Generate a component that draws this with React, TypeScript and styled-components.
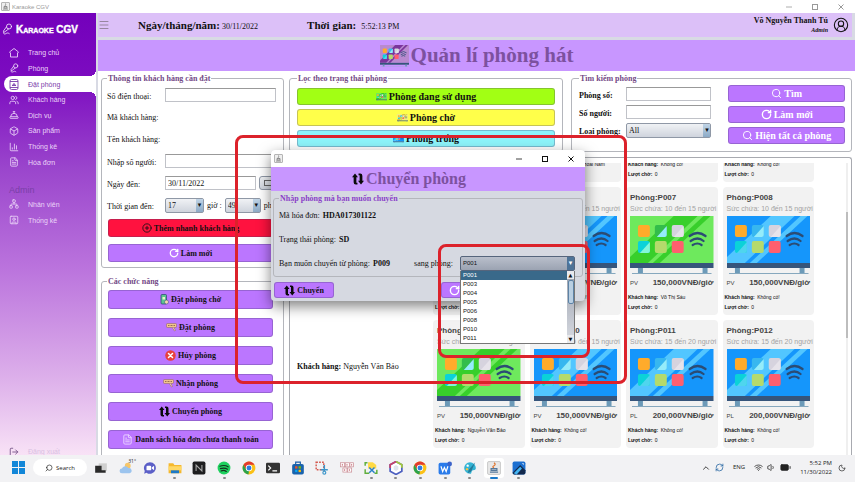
import React from 'react';
import styled, { createGlobalStyle, css } from 'styled-components';
import {
  BatteryMedium, Box, ChevronUp, CircleUserRound, CirclePlus, ConciergeBell, FileText, LogOut, Menu,
  MicVocal, Moon, RefreshCw, RotateCw, Search, ChartColumn, SquareUser, Users, Volume1, Wifi, Network,
} from 'lucide-react';

const serif = '"Liberation Serif", "Times New Roman", serif';
const sans = '"Liberation Sans", Arial, sans-serif';
const ui = '"Open Sans", "Noto Sans", sans-serif';

const GlobalStyle = createGlobalStyle`
  *, *::before, *::after { box-sizing: border-box; }
  body { margin: 0; font-family: ${sans}; color: #111; background: #fff; }
  button, input, select { font-family: inherit; margin: 0; }
  svg { display: block; flex: none; }
`;

/* ---------- shell ---------- */
const Desktop = styled.div`
  position: relative;
  height: 100vh;
  display: flex;
  flex-direction: column;
  overflow: hidden;
`;
const WindowBar = styled.header`
  display: flex;
  align-items: center;
  gap: 2px;
  height: 13px;
  padding: 0 10px 0 1px;
  font: 6px ${sans};
  color: #999;
  flex: none;
`;
const WindowControls = styled.div`
  display: flex;
  gap: 18px;
  margin-left: auto;
`;
const PlainButton = styled.button`
  padding: 0;
  border: 0;
  background: none;
  color: inherit;
  cursor: pointer;
`;
const Body = styled.div`
  flex: 1;
  min-height: 0;
  display: flex;
`;

/* ---------- sidebar ---------- */
const Sidebar = styled.nav`
  width: 96px;
  flex: none;
  display: flex;
  flex-direction: column;
  overflow: hidden;
  background: linear-gradient(#7300bb 0%, #7c0cc0 15%, #9a45cc 35%, #bb74dd 58%, #dcaeea 82%, #f8e2f6 100%);
`;
const Brand = styled.div`
  display: flex;
  align-items: center;
  gap: 3px;
  height: 32px;
  padding-left: 1px;
  color: #fff;
  font: bold 10px ${sans};
  font-variant: small-caps;
  -webkit-text-stroke: 0.4px #fff;
  white-space: nowrap;
`;
const NavGroup = styled.div<{ $rows: number }>`
  display: grid;
  grid-auto-rows: 1fr;
  height: ${p => p.$rows * 16 - (p.$rows > 4 ? 3 : 0)}px;
`;
const NavLink = styled.a<{ $active?: boolean }>`
  position: relative;
  display: flex;
  align-items: center;
  gap: 9px;
  padding-left: 9px;
  color: #ead4f8;
  font-size: 7px;
  text-decoration: none;
  white-space: nowrap;
  ${p => p.$active && css`
    margin-left: 4px;
    padding-left: 5px;
    color: #7b3cab;
    background: #fff;
    border-radius: 8px 0 0 8px;
    &::before, &::after {
      content: '';
      position: absolute;
      right: 0;
      width: 6px;
      height: 6px;
    }
    &::before { bottom: 100%; background: radial-gradient(circle at 0 0, transparent 6px, #fff 6px); }
    &::after { top: 100%; background: radial-gradient(circle at 0 100%, transparent 6px, #fff 6px); }
  `}
`;
const NavHeading = styled.h2`
  margin: 15px 0 0;
  padding-left: 9px;
  color: #7a3fa8;
  font: 9px/11px ${sans};
`;
const LogoutLink = styled(NavLink)`
  margin-top: auto;
  height: 7px;
  color: #d9c0e2;
  svg { color: #6c4a80; }
`;

/* ---------- main ---------- */
const Main = styled.main`
  flex: 1;
  min-width: 0;
  display: flex;
  flex-direction: column;
  padding-left: 2px;
  background: #d8dae4;
`;
const TopBar = styled.div`
  display: flex;
  align-items: center;
  height: 24px;
  flex: none;
  margin-right: 3px;
  padding: 0 3px 0 0;
  background: #dcc0f8;
  font-family: ${serif};
`;
const Stat = styled.div<{ $gap: number; $left: number }>`
  display: flex;
  align-items: baseline;
  gap: ${p => p.$gap}px;
  margin-left: ${p => p.$left}px;
  font-size: 8px;
  white-space: nowrap;
  strong { font-size: 11px; }
`;
const UserBox = styled.div`
  display: flex;
  align-items: center;
  gap: 5px;
  margin-left: auto;
  text-align: right;
  font: bold 8px/10px ${serif};
  em { display: block; font-size: 6px; line-height: 8px; }
`;
const PageTitle = styled.h1`
  display: flex;
  align-items: center;
  justify-content: center;
  gap: 2px;
  flex: none;
  height: 31px;
  margin: 3px 0 0;
  background: #c896ff;
  color: #7d519f;
  font: bold 21px ${serif};
`;
const Content = styled.div`
  flex: 1;
  min-height: 0;
  display: grid;
  grid-template-columns: 183px minmax(0, 1fr);
  gap: 5px;
  padding: 3px 3px 0;
  background: #fff;
  overflow: hidden;
`;
const Column = styled.div`
  display: flex;
  flex-direction: column;
  min-width: 0;
  min-height: 0;
`;
const FilterRow = styled.div`
  display: grid;
  grid-template-columns: minmax(0, 274fr) minmax(0, 281fr);
  gap: 8px;
  flex: none;
`;
const Panel = styled.fieldset<{ $pad: string; $legend?: string }>`
  min-width: 0;
  margin: 0;
  padding: ${p => p.$pad};
  border: 1px solid #b4b6bc;
  border-radius: 3px;
  font-family: ${serif};
  font-size: 8px;
  > legend {
    padding: 0 1px;
    color: ${p => p.$legend || '#744a86'};
    font-weight: bold;
    line-height: 9px;
    white-space: nowrap;
  }
`;
const Field = styled.div<{ $label: number; $height: number; $bold?: boolean }>`
  display: grid;
  grid-template-columns: ${p => p.$label}px minmax(0, 1fr);
  align-items: center;
  height: ${p => p.$height}px;
  label, > span { font-weight: ${p => (p.$bold ? 'bold' : 'normal')}; white-space: nowrap; }
  label { padding-top: 3px; }
`;
const TextInput = styled.input`
  width: 100%;
  min-width: 0;
  height: 14px;
  padding: 0 2px;
  border: 1px solid #c0c2c8;
  border-top-color: #999;
  background: #fff;
  color: #111;
  font: 8px ${serif};
`;
const Inline = styled.div`
  display: flex;
  align-items: center;
  gap: 3px;
  white-space: nowrap;
`;
const SelectWrap = styled.div<{ $width?: number; $dark?: boolean }>`
  position: relative;
  flex: none;
  width: ${p => (p.$width ? `${p.$width}px` : '100%')};
  select {
    display: block;
    appearance: none;
    width: 100%;
    height: 15px;
    padding: 0 10px 0 2px;
    border: 1px solid ${p => (p.$dark ? '#56657c' : '#8f98a6')};
    border-radius: 2px;
    background: ${p => (p.$dark ? 'linear-gradient(#b9bfcb, #9ba3b2)' : 'linear-gradient(#f0f2f5, #cfd4dd)')};
    color: #111;
    font: ${p => (p.$dark ? `6px ${sans}` : `8px ${serif}`)};
  }
  &::after {
    content: '▾';
    position: absolute;
    inset: 1px 1px 1px auto;
    width: 7px;
    background: ${p => (p.$dark ? '#4e7397' : 'linear-gradient(#c0d4e6, #8caac6)')};
    color: ${p => (p.$dark ? '#fff' : '#111')};
    font: 7px/13px "DejaVu Sans", sans-serif;
    text-align: center;
    pointer-events: none;
  }
`;
const ActionButton = styled.button<{ $bg?: string; $fg?: string; $size?: number; $height?: number }>`
  display: flex;
  align-items: center;
  justify-content: center;
  gap: 2px;
  width: 100%;
  height: ${p => p.$height || 19}px;
  padding: 0;
  border: 1px solid rgba(70, 60, 110, 0.3);
  border-radius: 3px;
  background: ${p => p.$bg || '#bb76ff'};
  color: ${p => p.$fg || '#111'};
  font: bold ${p => p.$size || 8}px ${serif};
  white-space: nowrap;
  cursor: pointer;
`;
const Stack = styled.div<{ $gap: number; $top?: number }>`
  display: flex;
  flex-direction: column;
  gap: ${p => p.$gap}px;
  margin-top: ${p => p.$top || 0}px;
`;
const ButtonArea = styled.div`
  padding: 0 3px 0 1px;
`;
const Functions = styled.div`
  margin-top: 9px;
`;
const CalendarButton = styled.button`
  display: grid;
  place-items: center;
  flex: none;
  width: 17px;
  height: 14px;
  padding: 0;
  border: 1px solid #8f98a6;
  border-radius: 3px;
  background: linear-gradient(#f0f2f5, #cfd4dd);
`;
const SearchGrid = styled.div`
  display: grid;
  grid-template-columns: minmax(0, 133fr) minmax(0, 117fr);
  gap: 17px;
`;

/* ---------- rooms ---------- */
const RoomsPanel = styled.section`
  flex: 1;
  min-height: 0;
  display: flex;
  margin-top: 5px;
  padding: 5px 3px 0 0;
  border: 1px solid #a8aab0;
  border-bottom: 0;
  border-radius: 3px 3px 0 0;
`;
const RoomInfo = styled.div`
  width: 143px;
  flex: none;
  display: flex;
  flex-direction: column;
  justify-content: flex-end;
  padding: 0 0 83px 7px;
  font: 8px/10px ${serif};
  white-space: nowrap;
`;
const RoomsViewport = styled.div`
  flex: 1;
  min-width: 0;
  display: flex;
  flex-direction: column;
  justify-content: flex-end;
  overflow: hidden;
  padding-bottom: 7px;
`;
const RoomsGrid = styled.div`
  display: grid;
  grid-template-columns: repeat(4, minmax(0, 1fr));
  gap: 5px;
`;
const ScrollTrack = styled.div`
  width: 2px;
  margin-left: 32px;
  padding-top: 49px;
  background: #efefef;
  &::before { content: ''; display: block; height: 126px; background: #bdbdbd; }
`;
const Card = styled.article`
  padding: 5px 4px 3px;
  border-radius: 4px;
  background: #f2f2f2;
  white-space: nowrap;
  h3 { margin: 0; color: #444; font: bold 8px/11px ${sans}; }
  svg { width: 100%; height: 58px; margin-top: 1px; }
`;
const Capacity = styled.div`
  color: #a2a2a2;
  font: 7px/12px ${sans};
`;
const Price = styled.div`
  display: flex;
  justify-content: space-between;
  color: #444;
  font: 6px/18px ${sans};
  strong { font-size: 8px; }
`;
const CardLine = styled.div`
  margin-left: -2px;
  font: 5px/10px ${sans};
  b { margin-right: 1px; }
`;

/* ---------- dialog ---------- */
const Dialog = styled.div`
  position: absolute;
  left: 271px;
  top: 150px;
  width: 314px;
  border-radius: 4px;
  background: #d6d9e1;
  box-shadow: 0 5px 14px rgba(0, 0, 0, 0.5);
`;
const DialogBar = styled.div`
  display: flex;
  align-items: center;
  height: 17px;
  padding: 0 10px 0 3px;
  background: #fff;
  border-radius: 4px 4px 0 0;
`;
const DialogTitle = styled.h2`
  display: flex;
  align-items: center;
  justify-content: center;
  gap: 2px;
  height: 24px;
  margin: 0;
  padding-right: 38px;
  background: #c896ff;
  color: #7d519f;
  font: bold 16px ${serif};
`;
const DialogBody = styled.div`
  padding: 3px 2px;
`;
const DialogLine = styled.div`
  display: flex;
  align-items: center;
  gap: 3px;
  height: 24px;
  white-space: nowrap;
`;
const TargetLabel = styled.label`
  margin-left: auto;
`;
const Picker = styled.div`
  position: relative;
  width: 115px;
  margin-left: 4px;
`;
const OptionList = styled.ul`
  position: absolute;
  z-index: 2;
  top: 100%;
  left: 0;
  right: 0;
  margin: 0;
  padding: 0 7px 0 0;
  border: 1px solid #777;
  border-top: 0;
  background: linear-gradient(#9aa0ac, #d8dbe2) right / 7px 100% no-repeat #fff;
  list-style: none;
  font: 6px/9px ${sans};
  &::before {
    content: '';
    position: absolute;
    right: 0;
    top: 9px;
    width: 6px;
    height: 24px;
    border: 1px solid #5d83a6;
    border-radius: 2px;
    background: #b9cfe2;
  }
`;
const Option = styled.li<{ $selected: boolean }>`
  padding-left: 2px;
  background: ${p => (p.$selected ? '#39698a' : '#fff')};
  color: ${p => (p.$selected ? '#fff' : '#111')};
`;
const ScrollArrow = styled.span<{ $end: 'top' | 'bottom' }>`
  position: absolute;
  right: 0;
  ${p => p.$end}: 0;
  width: 7px;
  height: 8px;
  background: #e8eaee;
  color: #111;
  font: 5px/8px "DejaVu Sans", sans-serif;
  text-align: center;
`;
const DialogActions = styled.div`
  display: grid;
  grid-template-columns: 60px 60px;
  gap: 107px;
  margin: 5px 0 0 1px;
`;
const Marker = styled.div<{ $x: number; $y: number; $w: number; $h: number }>`
  position: absolute;
  left: ${p => p.$x}px;
  top: ${p => p.$y}px;
  width: ${p => p.$w}px;
  height: ${p => p.$h}px;
  border: 3px solid #dc222b;
  border-radius: 8px;
  pointer-events: none;
`;

/* ---------- taskbar ---------- */
const Taskbar = styled.footer`
  display: flex;
  align-items: center;
  height: 27px;
  flex: none;
  padding: 0 9px 2px 12px;
  background: #f2f2f4;
  color: #222;
  font: 6px/9px ${ui};
`;
const SearchBox = styled.button`
  display: flex;
  align-items: center;
  justify-content: center;
  gap: 3px;
  width: 54px;
  height: 17px;
  margin: 0 2px 0 8px;
  padding: 0;
  border: 0;
  border-radius: 9px;
  background: #fff;
  color: #222;
  font: 6px ${ui};
  svg { transform: scaleX(-1); }
`;
const Apps = styled.div`
  display: grid;
  grid-template-columns: repeat(18, 1fr);
  width: 442px;
`;
const AppButton = styled(PlainButton)<{ $running?: boolean; $focused?: boolean }>`
  position: relative;
  display: grid;
  place-items: center;
  height: 20px;
  margin: 0 2px;
  border-radius: 3px;
  background: ${p => (p.$focused ? '#fff' : 'none')};
  &::after {
    content: '';
    position: absolute;
    bottom: -1px;
    width: ${p => (p.$focused ? 8 : 3)}px;
    height: 2px;
    border-radius: 1px;
    background: ${p => (p.$focused ? '#1a78c8' : p.$running ? '#888' : 'transparent')};
  }
`;
const Tray = styled.div`
  display: flex;
  align-items: center;
  gap: 4px;
  margin-left: auto;
`;
const Clock = styled.time`
  margin: 0 2px 0 5px;
  text-align: right;
`;
const Lang = styled.span`margin: 0 5px;`;

/* ---------- drawings ---------- */
const JavaIcon = ({ size = 9 }: { size?: number }) => (
  <svg width={size} height={size} viewBox="0 0 18 18">
    <rect x="1" y="1" width="16" height="16" rx="1" fill="#eee" stroke="#999" strokeWidth="1.4" />
    <path d="M9 3c2 2-2 3 0 5M6 9h6v3H6zM4 14h10" stroke="#777" strokeWidth="1.6" fill="none" />
  </svg>
);
const SwapIcon = ({ size = 11 }: { size?: number }) => (
  <svg width={size} height={size} viewBox="0 0 22 22" fill="#0a0a0a">
    <path d="M0 8 5.5 1 11 8H8v10h2v3H7q-4 0-4-4V8zM22 14l-5.500 7-5.500-7h3V4h-2V1h3q4 0 4 4v9z" />
  </svg>
);
const HomeIcon = () => (
  <svg width="10" height="10" viewBox="0 0 20 20" fill="none" stroke="currentColor" strokeWidth="1.8">
    <path d="M10 1 19 8l-2 2v8H3v-8L1 8z" />
  </svg>
);
const BookIcon = () => (
  <svg width="10" height="11" viewBox="0 0 20 22" fill="none" stroke="currentColor" strokeWidth="1.8">
    <rect x="2" y="1" width="16" height="20" rx="3" />
    <path d="M2 5h16M2 17h16M6 13q4-6 8 0zM10 8v2" />
  </svg>
);
const SignIcon = () => (
  <svg width="11" height="9" viewBox="0 0 22 18">
    <rect x="1" y="1" width="20" height="8" rx="2" fill="#f1c48c" stroke="#8a5c5c" />
    <path d="M4 5h14" stroke="#7a5340" strokeWidth="1.5" strokeDasharray="2 1" />
    <path d="m13 10 4 6 2-1-3-6" fill="#f3d2b4" stroke="#8a5c5c" />
  </svg>
);
const PhoneIcon = () => (
  <svg width="9" height="11" viewBox="0 0 18 22">
    <rect x="2" y="1" width="11" height="19" rx="2" fill="#5cc490" stroke="#2c4a72" strokeWidth="1.5" />
    <path d="M5 6h5v5H5z" fill="#e7f5c8" /><circle cx="13" cy="16" r="4" fill="#f5d9b0" stroke="#2c4a72" />
  </svg>
);
const CancelIcon = () => (
  <svg width="11" height="11" viewBox="0 0 22 22">
    <circle cx="11" cy="11" r="10.5" fill="#e8413c" />
    <path d="m7 7 8 8m0-8-8 8" stroke="#fff" strokeWidth="3" strokeLinecap="round" />
  </svg>
);
const CalendarGlyph = () => (
  <svg width="8" height="6" viewBox="0 0 8 6" fill="none" stroke="#666"><rect x=".5" y=".5" width="7" height="5" /></svg>
);

type Tone = 'blue' | 'green' | 'yellow' | 'violet';
const tones: Record<Tone, [string, string]> = {
  blue: ['#1596fb', '#52c6ff'],
  green: ['#6ee95d', '#38cf2b'],
  yellow: ['#f4f07a', '#d8c63c'],
  violet: ['#b98ad0', '#7b359c'],
};
const Television = ({ tone = 'blue', width, height }: { tone?: Tone; width?: number; height?: number }) => {
  const [base, band] = tones[tone];
  const green = tone === 'green';
  return (
    <svg viewBox="0 0 84 58" width={width} height={height} preserveAspectRatio="none">
      <path d="M0 0h84v47H0z" fill={base} />
      <path d="M44 0h24L18 47H0v-6z" fill={band} />
      <path d="M74 0h7L30 47h-7z" fill={band} />
      <rect x="8" y="9" width="12" height="12" rx="2" fill="#ffab2b" />
      <rect x="25" y="9" width="12" height="12" rx="2" fill={green ? '#33bd4b' : '#37b7ef'} />
      <path d="M37 10v9q0 2-2 2h-8z" fill="#95ecfa" />
      <rect x="42" y="9" width="12" height="12" rx="2" fill="#d6d3de" />
      <path d="M54 10v9q0 2-2 2h-8z" fill="#e6e3ea" />
      <rect x="8" y="25" width="12" height="12" rx="2" fill="#0bd2d8" />
      <path d="M20 26v9q0 2-2 2h-8z" fill={green ? '#83f6d8' : '#4fd5ee'} />
      <rect x="25" y="25" width="12" height="12" rx="2" fill="#b5da6c" />
      <rect x="42" y="25" width="12" height="12" rx="2" fill="#ff5f6e" />
      <g fill="none" stroke="#2b4c74" strokeWidth="2.2" strokeLinecap="round">
        <path d="M60 20q8-6 16 0M61 25q7-5 13 0M63 29q5-3 9 0" />
      </g>
      <path d="M0 47h84v5H0z" fill="#36557b" />
      <path d="M8 52h5v5H8zM73 52h5v5h-5z" fill="#6c9ab8" />
      <path d="M2 57.500h80" stroke="#86a8be" />
    </svg>
  );
};

const WindowGlyph = ({ kind }: { kind: 'min' | 'max' | 'close' }) => (
  <svg width="8" height="8" viewBox="0 0 8 8" fill="none" stroke="currentColor">
    {kind === 'min' && <path d="M1 4h6" strokeWidth=".8" />}
    {kind === 'max' && <rect x="1.5" y="1.5" width="5" height="5" />}
    {kind === 'close' && <path d="m1.500 1.500 5 5m0-5-5 5" />}
  </svg>
);
const Controls = () => (
  <WindowControls>
    {(['min', 'max', 'close'] as const).map(k => (
      <PlainButton key={k} aria-label={k}><WindowGlyph kind={k} /></PlainButton>
    ))}
  </WindowControls>
);

const appArt: Record<string, React.ReactNode> = {
  desktops: <><path d="M8 4h14v13H8z" fill="#cfcfcf" /><path d="M2 8h11v8h7v4H2z" fill="#2a2a2a" /></>,
  weather: <><circle cx="15" cy="8" r="5" fill="#f6c66a" /><path d="M5 21a4 4 0 0 1 0-8 6 6 0 0 1 11-1 4.500 4.500 0 0 1 2 9z" fill="#9cc4ee" /></>,
  chat: <><path d="M12 2a10 10 0 1 1-6 18l-4 2 1-5A10 10 0 0 1 12 2z" fill="#5b5fc7" /><rect x="6" y="8" width="8" height="8" rx="2" fill="#fff" /><path d="m15 11 4-3v8l-4-3z" fill="#fff" /></>,
  folder: <><path d="M1 4h8l2 3h12v14H1z" fill="#f5b82e" /><path d="M1 9h22v7H1z" fill="#ffd865" /><path d="M5 16h14v5H5z" fill="#1b79c9" /></>,
  notion: <><rect x="1" y="1" width="22" height="22" rx="3" fill="#1d1d1f" /><path d="M7 17V7l10 10V7" stroke="#aaa" strokeWidth="1.8" fill="none" /></>,
  spotify: <><circle cx="12" cy="12" r="11" fill="#1ed05e" /><path d="M5 9q8-3 14 1M6 13q7-2 12 1M7 17q5-2 9 1" stroke="#14321e" strokeWidth="2" fill="none" strokeLinecap="round" /></>,
  chrome: <><circle cx="12" cy="12" r="11" fill="#fbc116" /><path d="M2.500 6.500A11 11 0 0 1 21.500 6.500H12L7.200 14.800z" fill="#e33b2e" /><path d="M2.500 6.500 7.200 14.800 12 17.500 11 23A11 11 0 0 1 2.500 6.500z" fill="#2ba24c" /><circle cx="12" cy="12" r="5.5" fill="#fff" /><circle cx="12" cy="12" r="4.2" fill="#2f7de1" /></>,
  terminal: <><rect x="0" y="3" width="24" height="18" rx="2" fill="#333" /><path d="m4 8 4 4-4 4M11 17h8" stroke="#fff" strokeWidth="2" fill="none" /></>,
  store: <><path d="M8 6V2h8v4" stroke="#1b5fa8" strokeWidth="2" fill="none" /><rect x="2" y="5" width="20" height="18" rx="3" fill="#1a63ad" /><path d="M7 9h4v4H7z" fill="#f35325" /><path d="M13 9h4v4h-4z" fill="#81bc06" /><path d="M7 15h4v4H7z" fill="#05a6f0" /><path d="M13 15h4v4h-4z" fill="#ffba08" /></>,
  snip: <><rect x="2" y="2" width="13" height="13" fill="none" stroke="#d4594f" strokeWidth="2.5" strokeDasharray="3 2" /><path d="M16 7v10M10 15h12" stroke="#3a95c9" strokeWidth="2.5" /><circle cx="16" cy="20" r="2.5" fill="none" stroke="#3a95c9" strokeWidth="2" /></>,
  keys: <g fill="#fff" stroke="#c98a92" strokeWidth="1.2"><rect x="1" y="3" width="7" height="7" /><rect x="9" y="3" width="7" height="7" /><rect x="17" y="3" width="6" height="7" /><rect x="5" y="12" width="7" height="7" /><rect x="13" y="12" width="7" height="7" /><path d="M4 5v3M12 5v3M20 5v3M8 14v3M16 14v3" stroke="#b53d4d" /></g>,
  tools: <><path d="M7 2h8l6 5v6H7z" fill="#ffda45" /><path d="M2 14v7h7M22 15v6h-4M2 8V3h4" stroke="#5fae3c" strokeWidth="2.5" fill="none" /><path d="m9 11 9 9m0-9-9 9" stroke="#2b82c9" strokeWidth="2.5" /></>,
  netbeans: <><path d="m12 1 10 5.500v11L12 23 2 17.500v-11z" fill="#fff" stroke="#4d5fc0" strokeWidth="3" /><path d="m12 1 10 5.500v5" stroke="#a5cb3c" strokeWidth="3" fill="none" /><path d="M2 12V6.500L12 1" stroke="#c9426b" strokeWidth="3" fill="none" /><path d="m12 7 4 2.500v5L12 17l-4-2.500v-5z" fill="#dfe5ee" /></>,
  writer: <><rect x="1" y="3" width="20" height="20" rx="3" fill="#2a7bea" /><path d="m5 9 3 9 3-7 3 7 3-9" stroke="#fff" strokeWidth="2" fill="none" /><circle cx="20" cy="5" r="4" fill="#3d63c9" /></>,
  paint: <><path d="M12 2a10 10 0 0 0 0 20c3 0 2-3 3-5s7 0 7-5A10 10 0 0 0 12 2z" fill="#33b3d4" /><circle cx="8" cy="8" r="2" fill="#fff" /><circle cx="7" cy="14" r="2" fill="#f5c344" /><path d="M21 2 10 15l-2 6 6-3z" fill="#237a9a" /></>,
  java: <><rect x="1" y="1" width="22" height="22" rx="2" fill="#e8e8e8" stroke="#aaa" /><path d="M12 3q4 3 0 5t0 4" stroke="#e0742d" strokeWidth="2" fill="none" /><path d="M7 13h10v3H7zM5 19h14" stroke="#55789b" strokeWidth="2" fill="none" /></>,
  photos: <><rect x="1" y="1" width="22" height="22" rx="3" fill="#1b6fd0" /><path d="M1 20 14 7l9 9v4q0 3-3 3H4q-3 0-3-3z" fill="#12294d" /><path d="M17 4h3v3z" fill="#fff" /><path d="m3 21 11-11 3 3-9 10z" fill="#45b6f5" /></>,
};
const WeatherTemp = styled.span`
  position: absolute;
  top: 0;
  right: 0;
  font: 5px/6px ${ui};
`;
const apps: [string, boolean?, boolean?][] = [
  ['desktops'], ['weather'], ['chat'], ['folder', true], ['notion'], ['spotify', true], ['chrome'], ['terminal'],
  ['store'], ['snip'], ['keys'], ['tools', true], ['netbeans', true], ['chrome', true], ['writer', true],
  ['paint', true], ['java', true, true], ['photos', true],
];

/* ---------- data ---------- */
const nav = [
  ['Trang chủ', <HomeIcon />], ['Phòng', <MicVocal size={10} />], ['Đặt phòng', <BookIcon />],
  ['Khách hàng', <Users size={10} />], ['Dịch vụ', <ConciergeBell size={10} />], ['Sản phẩm', <Box size={10} />],
  ['Thống kê', <ChartColumn size={10} />], ['Hóa đơn', <FileText size={10} />],
] as const;
const adminNav = [['Nhân viên', <Network size={10} />], ['Thống kê', <SquareUser size={10} />]] as const;

type Room = { id: string; cap: string; tone: Tone; type: string; price: string; guest: string };
const room = (id: string, guest = 'Không có!', tone: Tone = 'blue', large = false): Room => ({
  id, guest, tone, cap: large ? '15 đến 20' : '10 đến 15', type: large ? 'PL' : 'PV', price: large ? '200,000' : '150,000',
});
const rooms: Room[] = [
  room('P001'), room('P002', 'Nguyễn Hoài Nam', 'green'), room('P003'), room('P004'),
  room('P005'), room('P006'), room('P007', 'Võ Thị Sáu', 'green'), room('P008'),
  room('P009', 'Nguyễn Văn Bảo', 'green'), room('P010'),
  room('P011', undefined, 'blue', true), room('P012', undefined, 'blue', true),
];
const options = ['P001', 'P003', 'P004', 'P005', 'P006', 'P008', 'P010', 'P011'];

export default function App() {
  return (
    <Desktop>
      <GlobalStyle />
      <WindowBar><JavaIcon /> Karaoke CGV <Controls /></WindowBar>
      <Body>
        <Sidebar>
          <Brand><MicVocal size={12} strokeWidth={1.5} />Karaoke CGV</Brand>
          <NavGroup $rows={8}>
            {nav.map(([label, icon]) => (
              <NavLink key={label} href="#" $active={label === 'Đặt phòng'}>{icon}{label}</NavLink>
            ))}
          </NavGroup>
          <NavHeading>Admin</NavHeading>
          <NavGroup $rows={2}>
            {adminNav.map(([label, icon]) => <NavLink key={label} href="#">{icon}{label}</NavLink>)}
          </NavGroup>
          <LogoutLink href="#"><LogOut size={10} />Đăng xuất</LogoutLink>
        </Sidebar>

        <Main>
          <TopBar>
            <PlainButton aria-label="Menu"><Menu size={12} color="#97869f" /></PlainButton>
            <Stat $gap={2} $left={28}><strong>Ngày/tháng/năm:</strong>30/11/2022</Stat>
            <Stat $gap={5} $left={49}><strong>Thời gian:</strong>5:52:13 PM</Stat>
            <UserBox><div>Võ Nguyễn Thanh Tú<em>Admin</em></div><CircleUserRound size={16} strokeWidth={1.6} /></UserBox>
          </TopBar>
          <PageTitle><Television tone="violet" width={29} height={22} />Quản lí phòng hát</PageTitle>

          <Content>
            <Column>
              <Panel $pad="1px 7px 5px 5px">
                <legend>Thông tin khách hàng cần đặt</legend>
                <Field $label={58} $height={22}><label htmlFor="phone">Số điện thoại:</label><TextInput id="phone" /></Field>
                <Field $label={58} $height={22}><span>Mã khách hàng:</span></Field>
                <Field $label={58} $height={22}><span>Tên khách hàng:</span></Field>
                <Field $label={58} $height={22}><label htmlFor="people">Nhập số người:</label><TextInput id="people" /></Field>
                <Field $label={58} $height={22}>
                  <label htmlFor="date">Ngày đến:</label>
                  <Inline>
                    <TextInput id="date" defaultValue="30/11/2022" />
                    <CalendarButton aria-label="Chọn ngày"><CalendarGlyph /></CalendarButton>
                  </Inline>
                </Field>
                <Field $label={58} $height={22}>
                  <label htmlFor="hour">Thời gian đến:</label>
                  <Inline>
                    <SelectWrap $width={39}><select id="hour"><option>17</option></select></SelectWrap>
                    giờ :
                    <SelectWrap $width={36}><select aria-label="Phút"><option>49</option></select></SelectWrap>
                    phút
                  </Inline>
                </Field>
                <ButtonArea>
                  <Stack $gap={7} $top={3}>
                    <ActionButton $height={18} $bg="#ff123f"><CirclePlus size={10} /> Thêm nhanh khách hàng</ActionButton>
                    <ActionButton $height={18}><RotateCw size={10} strokeWidth={3} color="#fff" /> Làm mới</ActionButton>
                  </Stack>
                </ButtonArea>
              </Panel>
              <Functions>
                <Panel $pad="4px 7px 20px 5px">
                  <legend>Các chức năng</legend>
                  <ButtonArea>
                    <Stack $gap={9}>
                      <ActionButton><PhoneIcon /> Đặt phòng chờ</ActionButton>
                      <ActionButton><SignIcon /> Đặt phòng</ActionButton>
                      <ActionButton><CancelIcon /> Hủy phòng</ActionButton>
                      <ActionButton><SignIcon /> Nhận phòng</ActionButton>
                      <ActionButton><SwapIcon /> Chuyển phòng</ActionButton>
                      <ActionButton><FileText size={11} color="#ecd8ff" /> Danh sách hóa đơn chưa thanh toán</ActionButton>
                    </Stack>
                  </ButtonArea>
                </Panel>
              </Functions>
            </Column>

            <Column>
              <FilterRow>
                <Panel $pad="5px 7px 4px 7px">
                  <legend>Lọc theo trạng thái phòng</legend>
                  <Stack $gap={4}>
                    <ActionButton $height={17} $size={10} $bg="#a2ff14"><Television tone="green" width={11} height={8} /> Phòng đang sử dụng</ActionButton>
                    <ActionButton $height={17} $size={10} $bg="#ffff4a"><Television tone="yellow" width={11} height={8} /> Phòng chờ</ActionButton>
                    <ActionButton $height={17} $size={10} $bg="#8cf3f9"><Television width={11} height={8} /> Phòng trống</ActionButton>
                  </Stack>
                </Panel>
                <Panel $pad="1px 6px 7px 7px">
                  <legend>Tìm kiếm phòng</legend>
                  <SearchGrid>
                    <Stack $gap={0} $top={1}>
                      <Field $bold $label={47} $height={18}><label htmlFor="room">Phòng số:</label><TextInput id="room" /></Field>
                      <Field $bold $label={47} $height={18}><label htmlFor="count">Số người:</label><TextInput id="count" /></Field>
                      <Field $bold $label={47} $height={18}><label htmlFor="kind">Loại phòng:</label><SelectWrap><select id="kind"><option>All</option></select></SelectWrap></Field>
                    </Stack>
                    <Stack $gap={4} $top={1}>
                      <ActionButton $height={17} $size={10} $fg="#fff"><Search size={11} /> Tìm</ActionButton>
                      <ActionButton $height={17} $size={10} $fg="#fff"><RotateCw size={11} strokeWidth={3} /> Làm mới</ActionButton>
                      <ActionButton $height={17} $size={10} $fg="#fff"><Search size={11} /> Hiện tất cả phòng</ActionButton>
                    </Stack>
                  </SearchGrid>
                </Panel>
              </FilterRow>

              <RoomsPanel>
                <RoomInfo><div><b>Khách hàng:</b> Nguyễn Văn Bảo</div></RoomInfo>
                <RoomsViewport>
                  <RoomsGrid>
                    {rooms.map(r => (
                      <Card key={r.id}>
                        <h3>Phòng:{r.id}</h3>
                        <Capacity>Sức chứa: {r.cap} người</Capacity>
                        <Television tone={r.tone} />
                        <Price>{r.type}<strong>{r.price}VNĐ/giờ</strong></Price>
                        <CardLine><b>Khách hàng:</b> {r.guest}</CardLine>
                        <CardLine><b>Lượt chờ:</b> 0</CardLine>
                      </Card>
                    ))}
                  </RoomsGrid>
                </RoomsViewport>
                <ScrollTrack />
              </RoomsPanel>
            </Column>
          </Content>
        </Main>
      </Body>

      <Taskbar>
        <PlainButton aria-label="Start">
          <svg width="13" height="13" viewBox="0 0 13 13" fill="#1287d8"><path d="M0 0h6v6H0zM7 0h6v6H7zM0 7h6v6H0zM7 7h6v6H7z" /></svg>
        </PlainButton>
        <SearchBox><Search size={8} />Search</SearchBox>
        <Apps>
          {apps.map(([name, running, focused], i) => (
            <AppButton key={i} aria-label={name} $running={running} $focused={focused}>
              <svg width="14" height="14" viewBox="0 0 24 24">{appArt[name]}</svg>
              {name === 'weather' && <WeatherTemp>31°</WeatherTemp>}
            </AppButton>
          ))}
        </Apps>
        <Tray>
          <ChevronUp size={10} /><RefreshCw size={9} color="#1c5f9e" /><Lang>ENG</Lang>
          <Wifi size={9} /><Volume1 size={9} /><BatteryMedium size={11} fill="#222" />
          <Clock>5:52 PM<br />11/30/2022</Clock><Moon size={8} />
        </Tray>
      </Taskbar>

      <Dialog role="dialog" aria-labelledby="dialog-title">
        <DialogBar><JavaIcon /><Controls /></DialogBar>
        <DialogTitle id="dialog-title"><SwapIcon size={12} />Chuyển phòng</DialogTitle>
        <DialogBody>
          <Panel $pad="0 7px 1px 5px" $legend="#8a3fc8">
            <legend>Nhập phòng mà bạn muốn chuyển</legend>
            <DialogLine>Mã hóa đơn: <b>HDA017301122</b></DialogLine>
            <DialogLine>Trạng thái phòng: <b>SD</b></DialogLine>
            <DialogLine>
              Bạn muốn chuyển từ phòng: <b>P009</b>
              <TargetLabel htmlFor="target">sang phòng:</TargetLabel>
              <Picker>
                <SelectWrap $dark><select id="target">{options.map(o => <option key={o}>{o}</option>)}</select></SelectWrap>
                <OptionList>
                  {options.map((o, i) => <Option key={o} $selected={i === 0}>{o}</Option>)}
                  <ScrollArrow $end="top">▲</ScrollArrow><ScrollArrow $end="bottom">▼</ScrollArrow>
                </OptionList>
              </Picker>
            </DialogLine>
          </Panel>
          <DialogActions>
            <ActionButton $height={16}><SwapIcon /> Chuyển</ActionButton>
            <ActionButton $height={16}><RotateCw size={11} strokeWidth={3} color="#fff" /> Làm mới</ActionButton>
          </DialogActions>
        </DialogBody>
      </Dialog>
      <Marker $x={235} $y={135} $w={392} $h={249} />
      <Marker $x={438} $y={244} $w={152} $h={114} />
    </Desktop>
  );
}
